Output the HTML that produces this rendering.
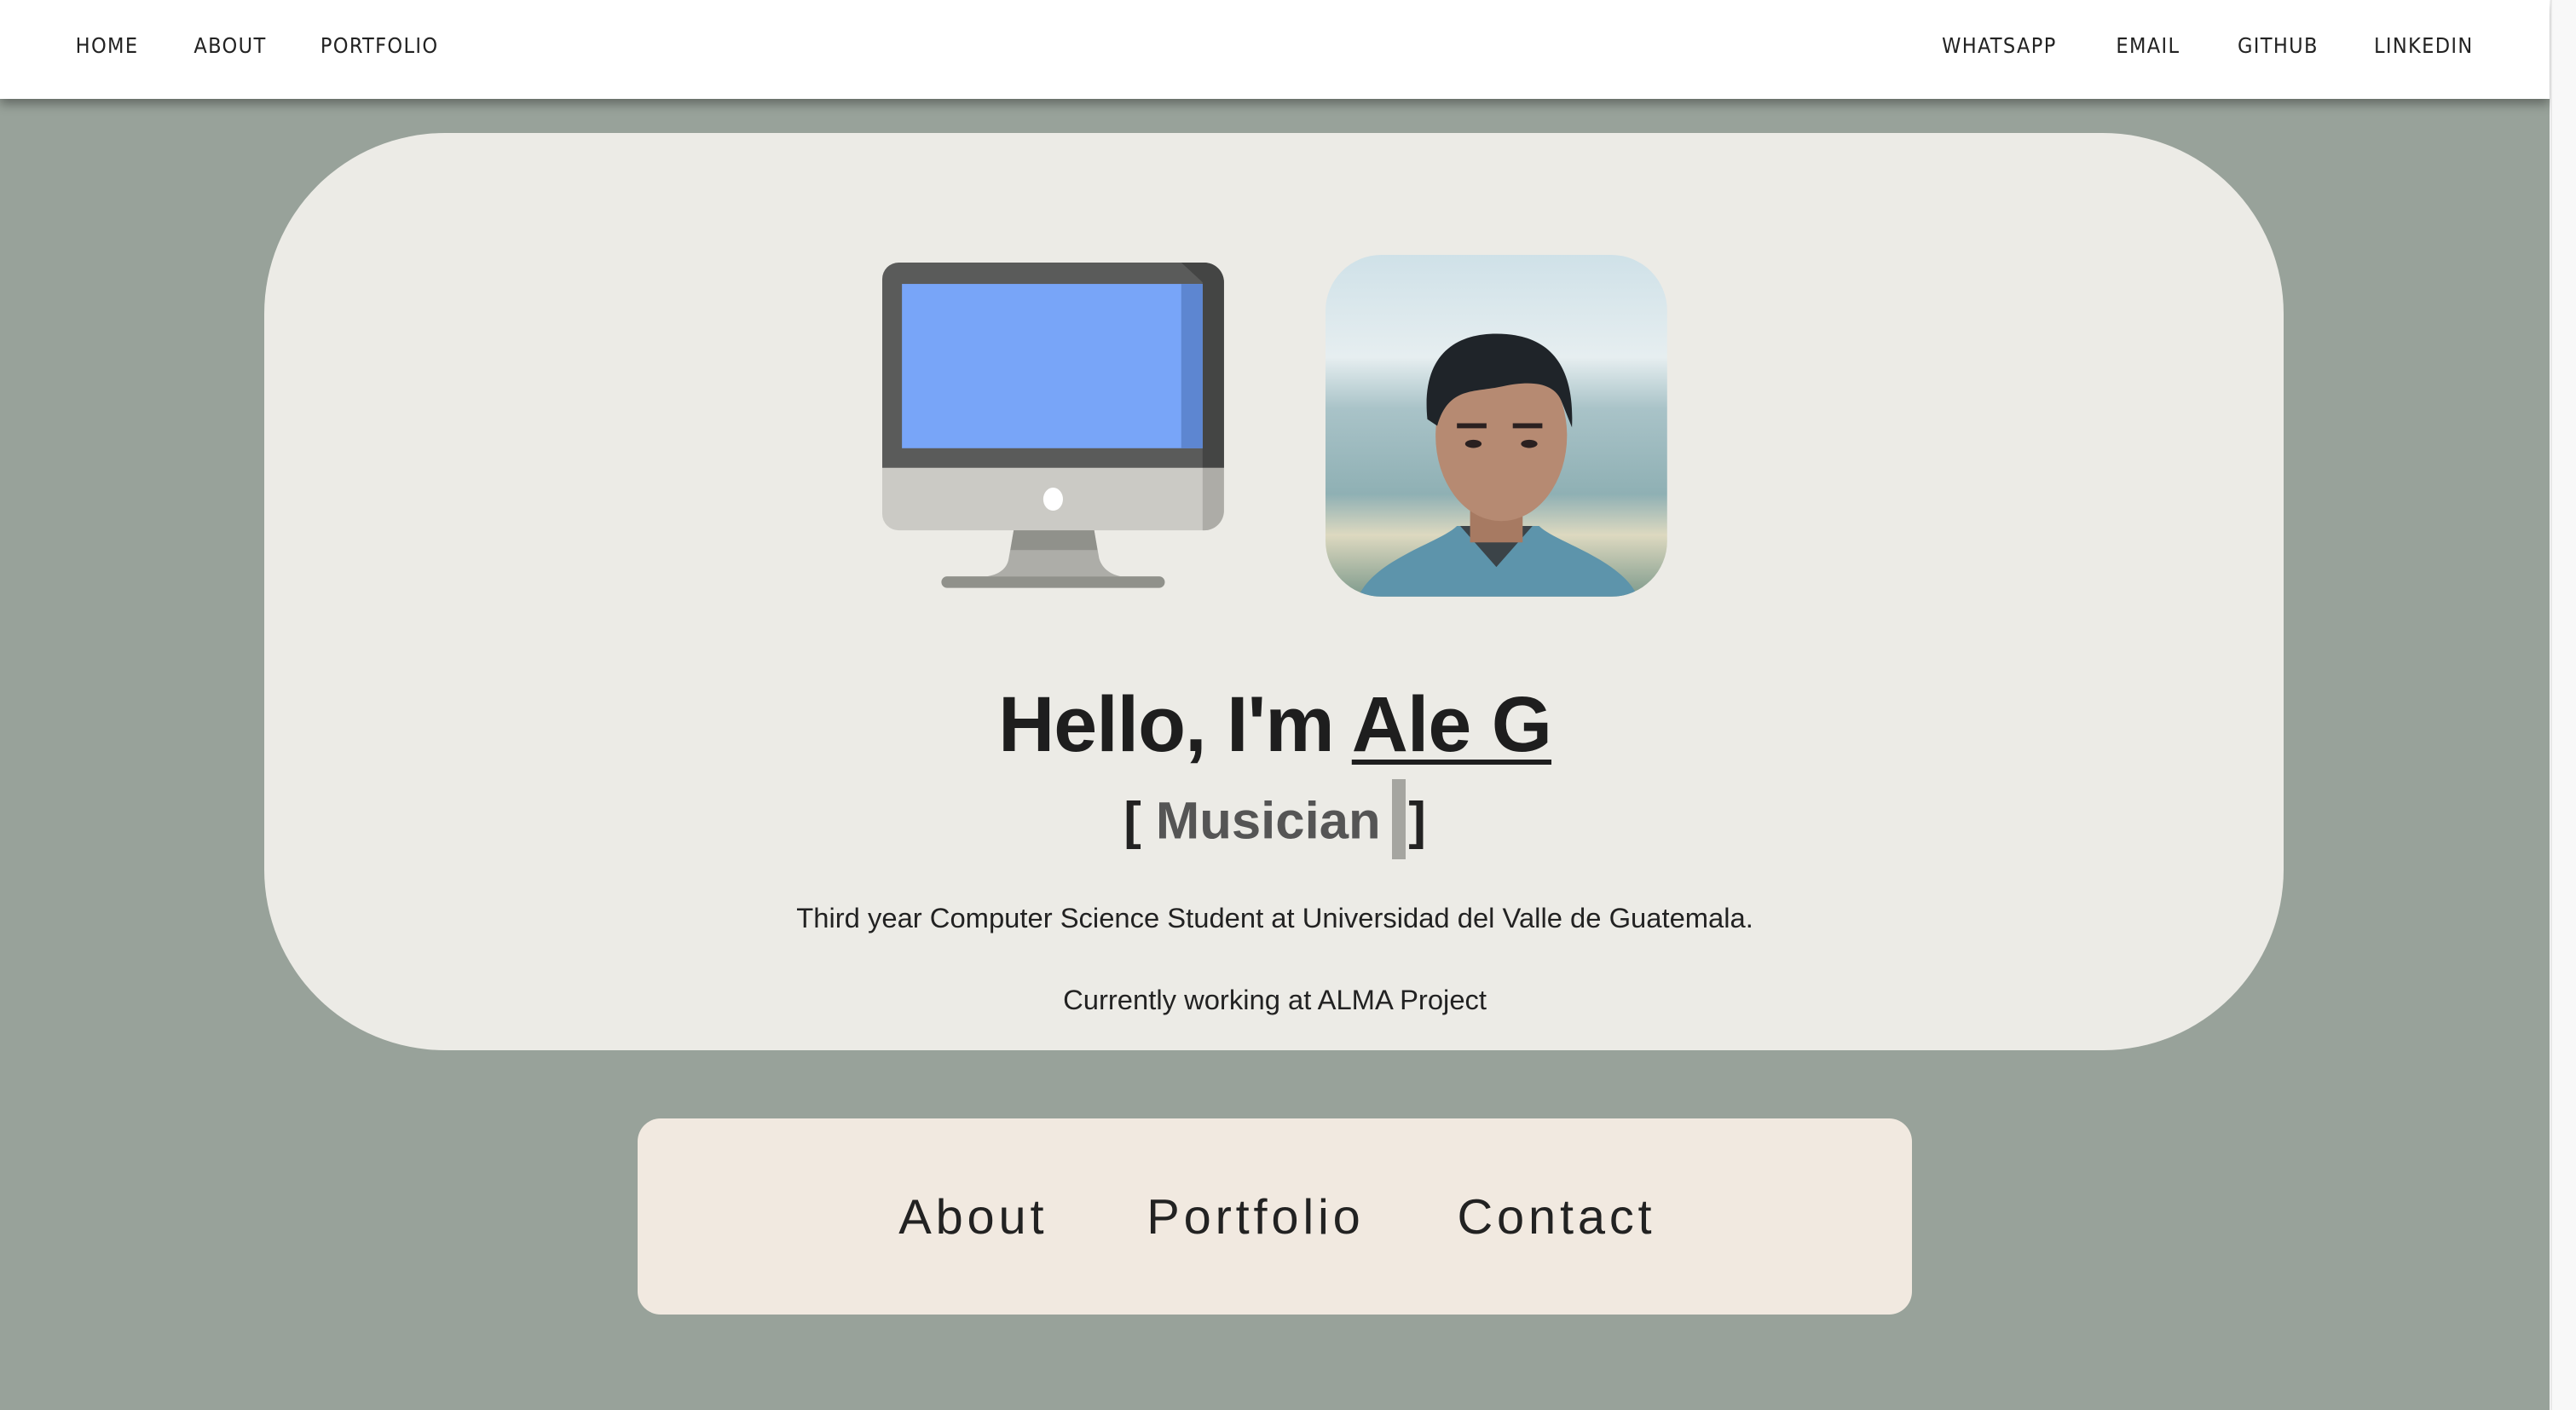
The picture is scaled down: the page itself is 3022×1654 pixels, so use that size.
<!DOCTYPE html>
<html><head><meta charset="utf-8"><style>
html,body{margin:0;padding:0;overflow:hidden}
body{width:3022px;height:1654px;background:#f8f8f8}
#w{zoom:1.9273;width:1552px;height:858px;background:#98a29a;position:relative;font-family:"Liberation Sans",sans-serif}
nav{position:absolute;left:0;top:0;width:1552px;height:60px;background:#fff;box-shadow:0 3px 6px rgba(0,0,0,.35)}
nav a{position:absolute;top:20px;font-family:"DejaVu Sans Condensed","Liberation Sans",sans-serif;font-size:13px;letter-spacing:.7px;color:#222;text-decoration:none}
.card{position:absolute;left:161px;top:81px;width:1229px;height:558px;background:#ecebe6;border-radius:110px}
h1{position:absolute;left:0;right:0;top:414px;margin:0;text-align:center;font-size:47.5px;font-weight:bold;color:#1e1e1e;letter-spacing:-.5px}
h1 u{text-decoration-thickness:3px;text-underline-offset:5px}
.sub{position:absolute;left:0;right:0;top:474px;text-align:center;font-size:32px;font-weight:bold;color:#222}
.sub span{color:#555}
.cur{display:inline-block;width:8px;height:49px;background:#a5a5a0;vertical-align:-13px;margin:0 2px 0 7px}
p{position:absolute;left:0;right:0;margin:0;text-align:center;font-size:17px;color:#222}
.box{position:absolute;left:388px;top:681px;width:776px;height:119px;background:#f1e9e0;border-radius:14px}
.box a{position:absolute;top:43px;font-size:30px;letter-spacing:2.5px;color:#222;font-weight:300}
</style></head><body><div id="w">
<nav><a style="left:46px">HOME</a><a style="left:118px">ABOUT</a><a style="left:195px">PORTFOLIO</a>
<a style="left:1182px">WHATSAPP</a><a style="left:1288px">EMAIL</a><a style="left:1362px">GITHUB</a><a style="left:1445px">LINKEDIN</a></nav>
<div class="card"></div>
<svg style="position:absolute;left:537px;top:160px" width="208" height="200" viewBox="0 0 208 200">
<path d="M10 0H196a12 12 0 0 1 12 12V125H0V10A10 10 0 0 1 10 0z" fill="#5a5b5a"/>
<path d="M182 0H196a12 12 0 0 1 12 12V125H195V12z" fill="#444544"/>
<rect x="12" y="13" width="183" height="100" fill="#78a5f8"/>
<rect x="182" y="13" width="13" height="100" fill="#5d86d1"/>
<path d="M0 125H208V151a12 12 0 0 1-12 12H10A10 10 0 0 1 0 153z" fill="#cbcac5"/>
<path d="M195 125H208V151a12 12 0 0 1-12 12H195z" fill="#adaca7"/>
<ellipse cx="104" cy="144" rx="6" ry="7" fill="#fff"/>
<path d="M80 163H129L132 180C134 187 140 190 145 191H64C70 190 76 187 77 180z" fill="#adada8"/>
<path d="M80 163H129L131 175H78z" fill="#90918b"/>
<rect x="36" y="191" width="136" height="7" rx="3.5" fill="#90918b"/>
</svg>
<svg style="position:absolute;left:807px;top:155px" width="208" height="208" viewBox="0 0 208 208">
<defs><clipPath id="c"><rect width="208" height="208" rx="34"/></clipPath>
<linearGradient id="s" x1="0" y1="0" x2="0" y2="1"><stop offset="0" stop-color="#cfe1e8"/><stop offset=".3" stop-color="#e6eef0"/><stop offset=".45" stop-color="#a9c3c8"/><stop offset=".7" stop-color="#8fb0b4"/><stop offset=".82" stop-color="#ddd9c0"/><stop offset="1" stop-color="#7e9a8c"/></linearGradient></defs>
<g clip-path="url(#c)"><rect width="208" height="208" fill="url(#s)"/>
<path d="M20 208C30 185 70 175 80 165H130C140 175 180 185 190 208z" fill="#5d94ab"/>
<path d="M82 165L104 190L126 165z" fill="#3b4348"/>
<rect x="88" y="140" width="32" height="35" fill="#a77a62"/>
<ellipse cx="107" cy="110" rx="40" ry="52" fill="#b68a72"/>
<path d="M62 100C58 60 80 48 104 48C132 48 152 62 150 105L144 90C140 78 126 76 108 80C90 84 75 80 68 104z" fill="#1f2429"/>
<ellipse cx="90" cy="115" rx="5" ry="2.5" fill="#2a2020"/><ellipse cx="124" cy="115" rx="5" ry="2.5" fill="#2a2020"/>
<path d="M80 104H98M114 104H132" stroke="#2a2020" stroke-width="3"/>
</g></svg>
<h1>Hello, I'm <u>Ale G</u></h1>
<div class="sub">[ <span>Musician</span><i class="cur"></i>]</div>
<p style="top:549px">Third year Computer Science Student at Universidad del Valle de Guatemala.</p>
<p style="top:599px">Currently working at ALMA Project</p>
<div class="box"><a style="left:159px">About</a><a style="left:310px">Portfolio</a><a style="left:499px">Contact</a></div>
</div><div style="position:absolute;left:2992px;top:0;width:30px;height:1654px;background:#f8f8f8;border-left:2px solid #e8e8e8"></div></body></html>
